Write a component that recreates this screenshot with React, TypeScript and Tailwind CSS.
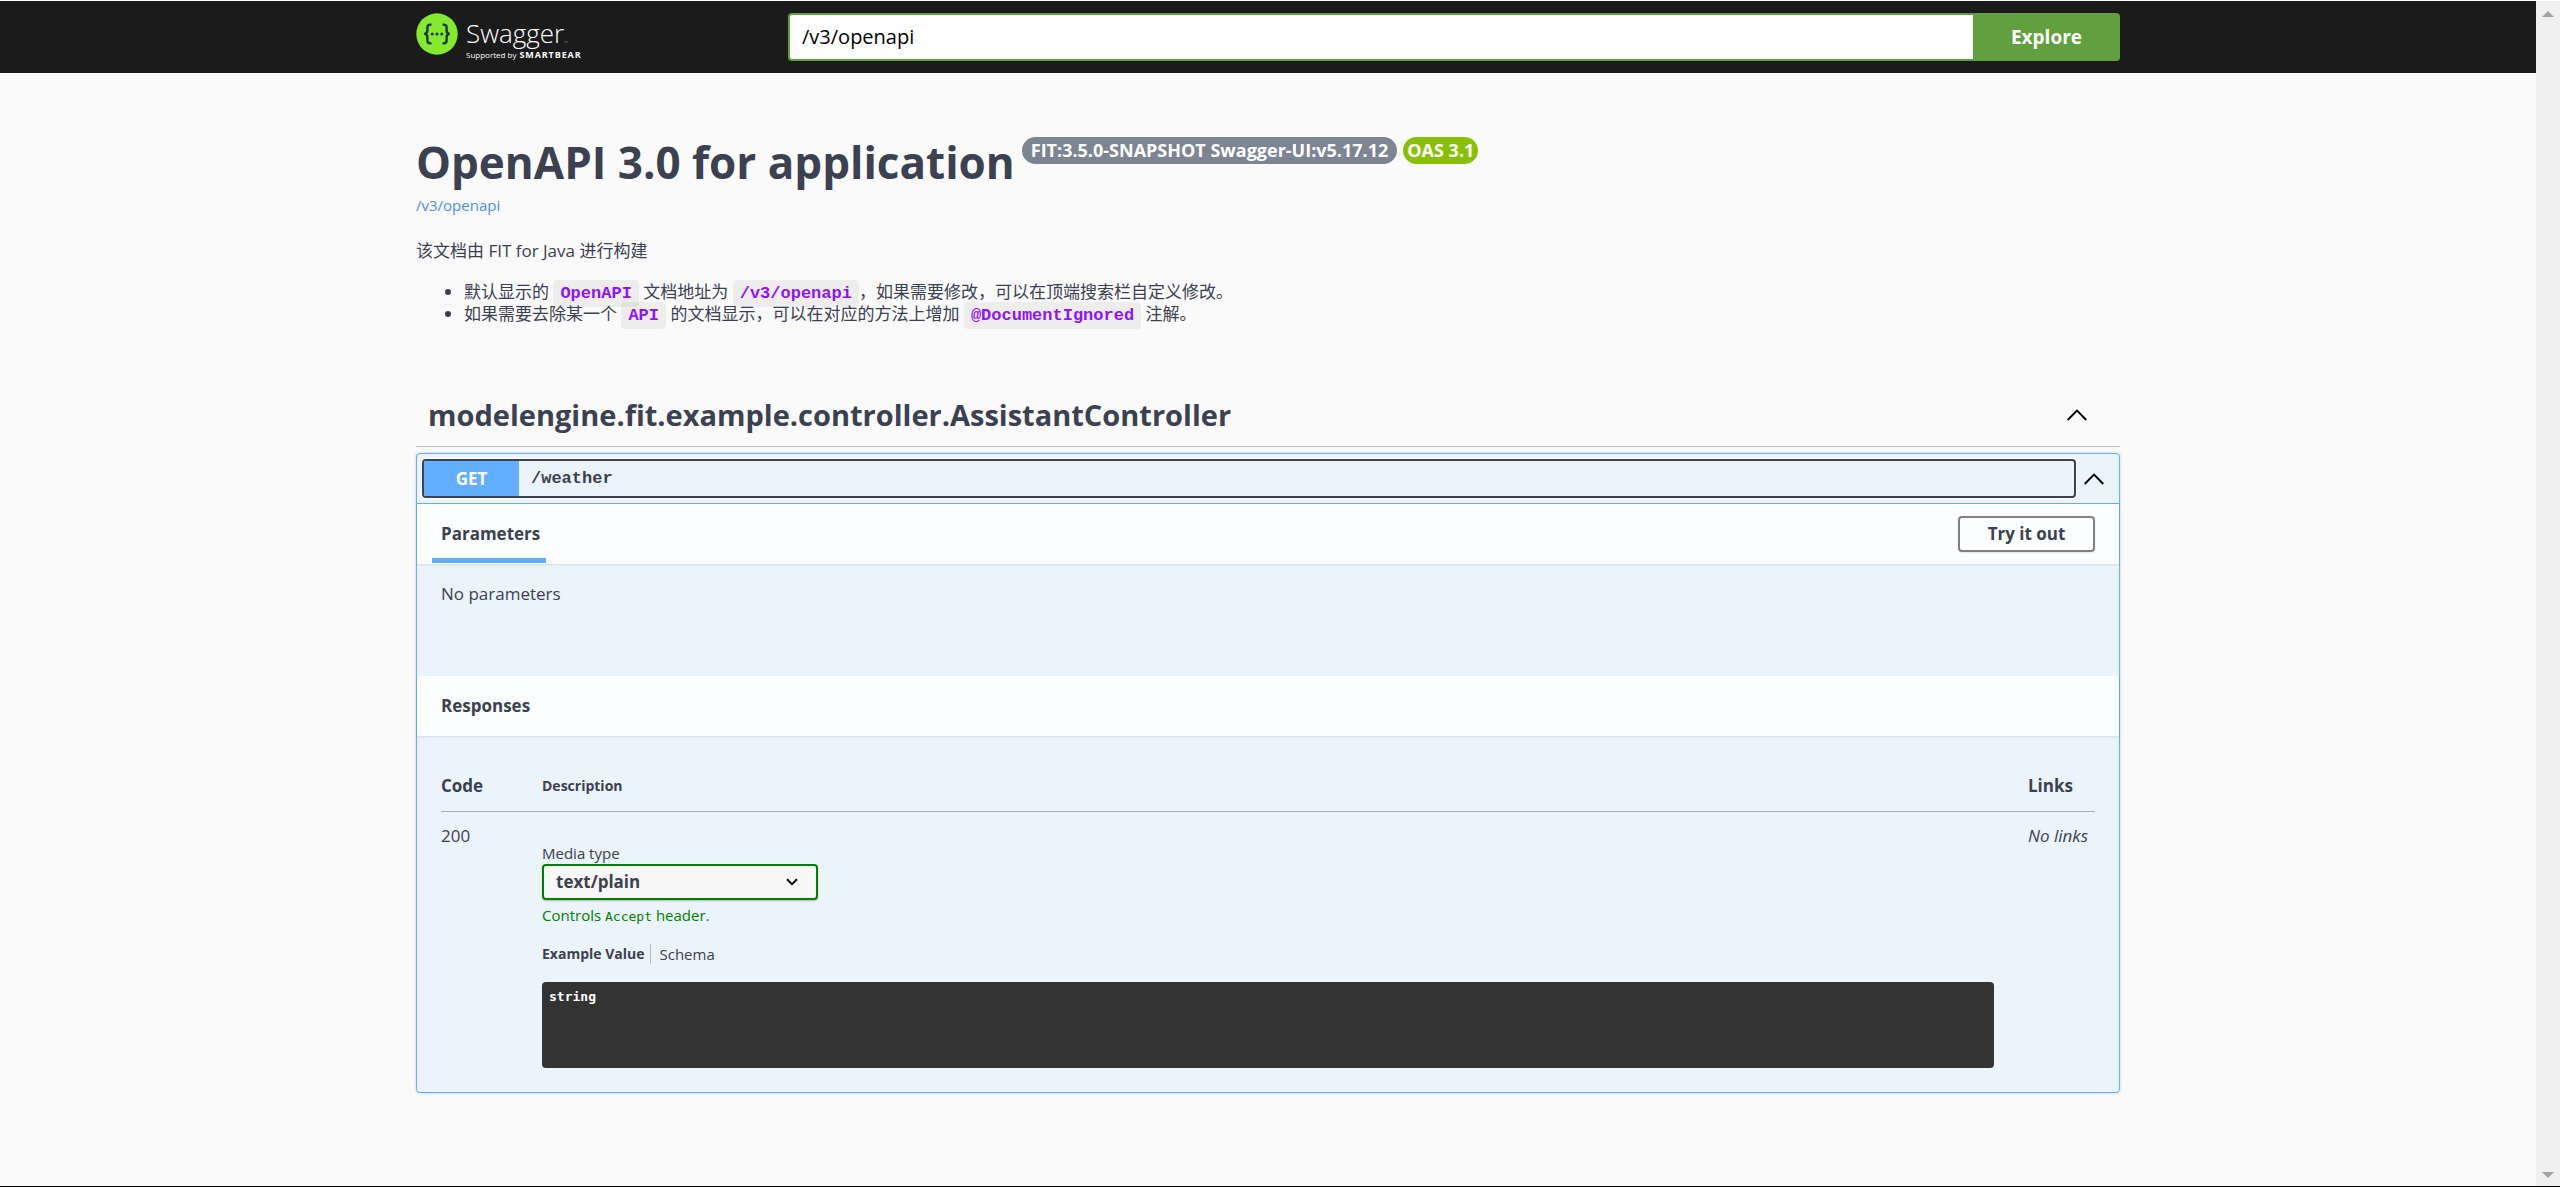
import React from "react";

const uiFont = "font-['Open_Sans','Noto_Sans_CJK_SC',sans-serif]";

function SwaggerMark() {
  return (
    <svg viewBox="0 0 42 42" className="size-[42px] shrink-0" aria-hidden="true">
      <circle cx="21" cy="21" r="20.7" fill="#85ea2d" />
      <g fill="none" stroke="#173647" strokeWidth="2.4">
        <path d="M15.5 11.6h-1.2c-2 0-2.9 1-2.9 2.8v3.2c0 2-1 3.2-3.2 3.3 2.2.1 3.2 1.3 3.2 3.3v3.3c0 1.9.9 2.9 2.900 2.900h1.200" />
        <path d="M26.500 11.600h1.200c2 0 2.900 1 2.900 2.800v3.200c0 2 1 3.200 3.200 3.300-2.200.1-3.200 1.300-3.200 3.300v3.300c0 1.900-.9 2.900-2.900 2.900h-1.200" />
      </g>
      <g fill="#173647">
        <circle cx="16.2" cy="21" r="1.5" />
        <circle cx="21" cy="21" r="1.5" />
        <circle cx="25.8" cy="21" r="1.5" />
      </g>
    </svg>
  );
}

function Logo() {
  return (
    <a href="#" className="flex w-[372px] shrink-0 items-start gap-2 text-white" aria-label="Swagger">
      <SwaggerMark />
      <span className="flex flex-col">
        <span className="flex items-end pt-1 text-[26px] leading-8 font-light">
          Swagger<span className="text-[5px] leading-[12px] text-neutral-400">™</span>
        </span>
        <span className="flex items-baseline gap-[3px] text-[8px] leading-3">
          Supported by <b className="text-[9px] tracking-widest">SMARTBEAR</b>
        </span>
      </span>
    </a>
  );
}

function Collapse({ label }: { label: string }) {
  return (
    <button type="button" aria-label={label} className="shrink-0">
      <svg viewBox="0 0 20 12" className="h-3 w-5" fill="none" stroke="#000" strokeWidth="1.8">
        <path d="M.7 11 10 1.6 19.3 11" />
      </svg>
    </button>
  );
}

function Code({ children }: { children: React.ReactNode }) {
  return (
    <code className="rounded bg-black/5 px-[7px] py-1 font-['Liberation_Mono',monospace] text-[17px] leading-none font-bold text-[#9012fe]">
      {children}
    </code>
  );
}

function Band({ children }: { children: React.ReactNode }) {
  return (
    <div className="flex h-15 items-center justify-between bg-white/80 px-6 shadow-[0_1px_2px_rgba(0,0,0,0.1)]">
      {children}
    </div>
  );
}

function TopBar() {
  return (
    <header className="bg-[#1b1b1b]">
      <div className="mx-auto flex max-w-[1752px] items-start px-6 py-3">
        <Logo />
        <form className="flex h-12 flex-1" onSubmit={(e) => e.preventDefault()}>
          <input
            type="text"
            aria-label="API definition URL"
            defaultValue="/v3/openapi"
            className="min-w-0 flex-1 rounded-l border-2 border-r-0 border-[#62a03f] bg-white px-3 text-[20px] text-black outline-none"
          />
          <button type="submit" className="w-[147px] rounded-r bg-[#62a03f] text-[19px] font-bold text-white">
            Explore
          </button>
        </form>
      </div>
    </header>
  );
}

function Info() {
  return (
    <section className="pt-16">
      <div className="flex items-start">
        <h1 className="mr-[7px] text-[44px] leading-[50px] font-bold">OpenAPI 3.0 for application</h1>
        <span className="mr-[6px] rounded-full bg-[#7d8492] px-[9px] text-[18px] leading-[27px] font-bold text-white">
          FIT:3.5.0-SNAPSHOT Swagger-UI:v5.17.12
        </span>
        <span className="rounded-full bg-[#89bf04] px-1 text-[18px] leading-[27px] font-bold text-white">OAS 3.1</span>
      </div>
      <a href="#" className="mt-[6px] block text-[15px] leading-6 text-[#4990e2]">
        /v3/openapi
      </a>
      <p className="mt-[22px] text-[17px] leading-6">该文档由 FIT for Java 进行构建</p>
      <ul className="mt-[18px] list-disc pl-12 text-[17px] leading-[22px]">
        <li>
          默认显示的 <Code>OpenAPI</Code> 文档地址为 <Code>/v3/openapi</Code>，如果需要修改，可以在顶端搜索栏自定义修改。
        </li>
        <li>
          如果需要去除某一个 <Code>API</Code> 的文档显示，可以在对应的方法上增加 <Code>@DocumentIgnored</Code> 注解。
        </li>
      </ul>
    </section>
  );
}

function Responses() {
  return (
    <div className="p-6">
      <table className="w-full text-left text-[17px] leading-6">
        <thead>
          <tr className="border-b border-[#3b4151]/40">
            <th className="w-[101px] pt-[14px] pb-[13px] font-bold">Code</th>
            <th className="pt-[14px] pb-[13px] text-[14px] font-bold">Description</th>
            <th className="w-[67px] pt-[14px] pb-[13px] font-bold">Links</th>
          </tr>
        </thead>
        <tbody>
          <tr className="align-top">
            <td className="pt-3">200</td>
            <td className="pt-[31px] pr-[34px] text-[15px] leading-5">
              <label htmlFor="media" className="block">
                Media type
              </label>
              <div className="relative mt-px w-[276px]">
                <select
                  id="media"
                  className="h-9 w-full appearance-none rounded border-2 border-[#008000] bg-[#f7f7f7] px-3 text-[17px] font-bold shadow-[0_1px_2px_rgba(0,0,0,0.25)]"
                >
                  <option>text/plain</option>
                </select>
                <svg viewBox="0 0 12 8" className="pointer-events-none absolute top-[14px] right-5 h-2 w-3" fill="none" stroke="#000" strokeWidth="2" aria-hidden="true">
                  <path d="M1 1.2 6 6.2 11 1.2" />
                </svg>
              </div>
              <p className="mt-[5px] text-[#008000]">
                Controls <code className="font-['DejaVu_Sans_Mono',monospace] text-[13px] leading-none">Accept</code> header.
              </p>
              <div className="mt-[19px] flex">
                <button type="button" className="border-r border-[#3b4151]/30 pr-[6px] text-[14px] font-bold">
                  Example Value
                </button>
                <button type="button" className="pl-2 text-[15px]">
                  Schema
                </button>
              </div>
              <pre className="mt-[18px] h-[86px] rounded bg-[#333] px-[7px] py-[5px] font-['DejaVu_Sans_Mono',monospace] text-[13px] font-bold text-white">
                string
              </pre>
            </td>
            <td className="pt-3 whitespace-nowrap italic">No links</td>
          </tr>
        </tbody>
      </table>
    </div>
  );
}

function Operation() {
  return (
    <article className="mt-[6px] rounded border border-[#61affe] bg-[#ebf3fb] shadow-[0_0_3px_rgba(0,0,0,0.19)]">
      <div className="flex items-center gap-2 border-b border-[#61affe] py-[5px] pr-[15px] pl-[5px]">
        <button type="button" className="flex h-[39px] flex-1 items-center rounded border-2 border-[#3b4151] text-left ring-1 ring-white">
          <span className="flex h-full w-[95px] items-center justify-center rounded-l-xs bg-[#61affe] text-[17px] font-bold text-white">
            GET
          </span>
          <span className="pl-3 font-['Liberation_Mono',monospace] text-[17px] font-bold">/weather</span>
        </button>
        <Collapse label="Collapse operation" />
      </div>
      <Band>
        <h4 className="relative text-[17px] leading-6 font-bold">
          Parameters
          <span className="absolute -right-[6px] -bottom-[17px] -left-[9px] h-[5px] bg-[#61affe]" />
        </h4>
        <button
          type="button"
          className="h-9 w-[137px] rounded border-2 border-[#808080] text-[17px] font-bold shadow-[0_1px_2px_rgba(0,0,0,0.1)]"
        >
          Try it out
        </button>
      </Band>
      <p className="px-6 pt-[18px] pb-[70px] text-[17px] leading-6">No parameters</p>
      <Band>
        <h4 className="text-[17px] leading-6 font-bold">Responses</h4>
      </Band>
      <Responses />
    </article>
  );
}

function ScrollTrack() {
  return (
    <div className="flex w-6 shrink-0 flex-col items-center justify-between bg-[#f0f0f0] pt-[10px] pb-2" aria-hidden="true">
      <svg viewBox="0 0 12 6" className="h-[6px] w-3" fill="#a3a3a3">
        <path d="M0 6 6 0l6 6z" />
      </svg>
      <svg viewBox="0 0 12 6" className="h-[6px] w-3" fill="#a3a3a3">
        <path d="M0 0h12L6 6z" />
      </svg>
    </div>
  );
}

export default function App() {
  return (
    <div className={`flex min-h-screen border-t border-b border-t-white border-b-black bg-[#fafafa] text-[#3b4151] ${uiFont}`}>
      <div className="min-w-0 flex-1">
        <TopBar />
        <main className="mx-auto max-w-[1752px] px-6">
          <Info />
          <section className="mt-[59px]">
            <div className="flex items-center justify-between border-b border-[#3b4151]/30 py-[11px] pr-[33px] pl-3">
              <h3 className="text-[29px] leading-10 font-bold">modelengine.fit.example.controller.AssistantController</h3>
              <Collapse label="Collapse section" />
            </div>
            <Operation />
          </section>
        </main>
      </div>
      <ScrollTrack />
    </div>
  );
}
